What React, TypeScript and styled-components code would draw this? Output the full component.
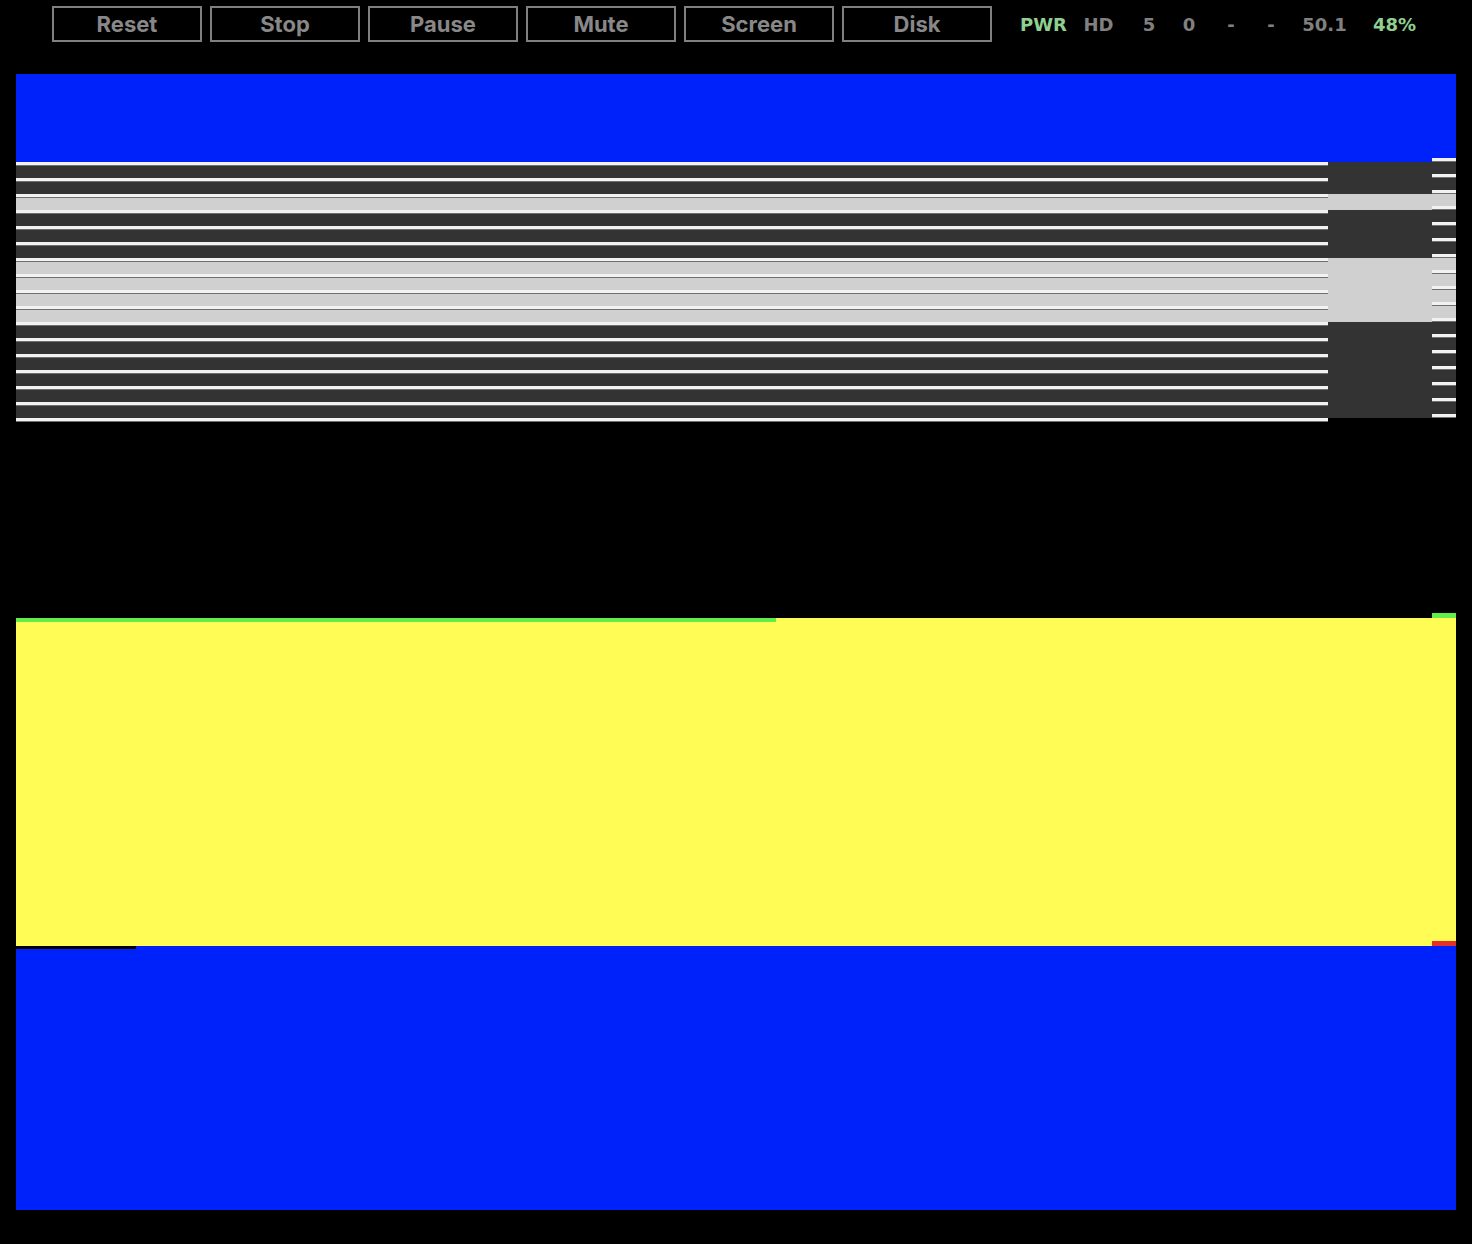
import styled, { createGlobalStyle } from "styled-components";

const GlobalStyle = createGlobalStyle`
  html, body {
    margin: 0;
    padding: 0;
    background: #000;
  }
`;

const Page = styled.div`
  width: 1472px;
  min-height: 1244px;
  background: #000;
`;

const Toolbar = styled.div`
  display: flex;
  align-items: center;
  gap: 8px;
  padding: 6px 0 0 52px;
`;

const Button = styled.button`
  width: 150px;
  height: 36px;
  box-sizing: border-box;
  border: 2px solid #808080;
  background: #000;
  color: #888;
  font-family: Inter, "Liberation Sans", sans-serif;
  font-weight: 700;
  font-size: 22px;
  padding: 0;
  cursor: pointer;
`;

const Status = styled.div`
  display: flex;
  align-items: center;
  padding-left: 16px;
`;

const Stat = styled.span<{ $w: number; $on?: boolean }>`
  width: ${(p) => p.$w}px;
  text-align: center;
  font-family: "DejaVu Sans", Verdana, sans-serif;
  font-weight: 700;
  font-size: 18px;
  color: ${(p) => (p.$on ? "#8fcf8f" : "#808080")};
`;

const Screen = styled.div`
  margin: 32px 0 0 16px;
  width: 1440px;
  height: 1136px;
  line-height: 0;
`;

const BLUE = "#0022fa";
const YELLOW = "#fffc55";
const DARK = "#333333";
const LIGHT = "#d0d0d0";

// colours of the 16 raster bands, top to bottom
const bands = [0, 0, 1, 0, 0, 0, 1, 1, 1, 1, 0, 0, 0, 0, 0, 0].map((b) =>
  b ? LIGHT : DARK
);

const Stripes = ({ x, w, top, lines }: { x: number; w: number; top: number; lines: boolean }) => (
  <g>
    <rect x={x} y={0} width={w} height={top} fill={BLUE} />
    {bands.map((c, i) => (
      <rect key={i} x={x} y={top + i * 16} width={w} height={16} fill={c} />
    ))}
    {lines &&
      Array.from({ length: 17 }, (_, i) => (
        <g key={i}>
          <rect x={x} y={top + i * 16} width={w} height={3} fill="#f2f2f2" />
          <rect x={x} y={top + i * 16 + 3} width={w} height={1} fill="#707070" />
        </g>
      ))}
  </g>
);

const ScreenImage = () => (
  <svg width="1440" height="1136" viewBox="0 0 1440 1136">
    <rect width="1440" height="1136" fill="#000" />
    <Stripes x={0} w={1312} top={88} lines />
    <Stripes x={1312} w={104} top={88} lines={false} />
    <Stripes x={1416} w={24} top={84} lines />

    <rect x={0} y={544} width={1416} height={328} fill={YELLOW} />
    <rect x={0} y={544} width={760} height={4} fill="#62ee4a" />
    <rect x={0} y={872} width={1416} height={264} fill={BLUE} />
    <rect x={0} y={872} width={120} height={3} fill="#000" />

    <rect x={1416} y={539} width={24} height={5} fill="#62ee4a" />
    <rect x={1416} y={544} width={24} height={323} fill={YELLOW} />
    <rect x={1416} y={867} width={24} height={5} fill="#e8302a" />
    <rect x={1416} y={872} width={24} height={264} fill={BLUE} />
  </svg>
);

const buttons = ["Reset", "Stop", "Pause", "Mute", "Screen", "Disk"];

const stats: { t: string; w: number; on?: boolean }[] = [
  { t: "PWR", w: 55, on: true },
  { t: "HD", w: 55 },
  { t: "5", w: 46 },
  { t: "0", w: 34 },
  { t: "-", w: 50 },
  { t: "-", w: 30 },
  { t: "50.1", w: 77 },
  { t: "48%", w: 63, on: true },
];

export default function App() {
  return (
    <Page>
      <GlobalStyle />
      <Toolbar>
        {buttons.map((b) => (
          <Button key={b}>{b}</Button>
        ))}
        <Status>
          {stats.map((s, i) => (
            <Stat key={i} $w={s.w} $on={s.on}>
              {s.t}
            </Stat>
          ))}
        </Status>
      </Toolbar>
      <Screen>
        <ScreenImage />
      </Screen>
    </Page>
  );
}
